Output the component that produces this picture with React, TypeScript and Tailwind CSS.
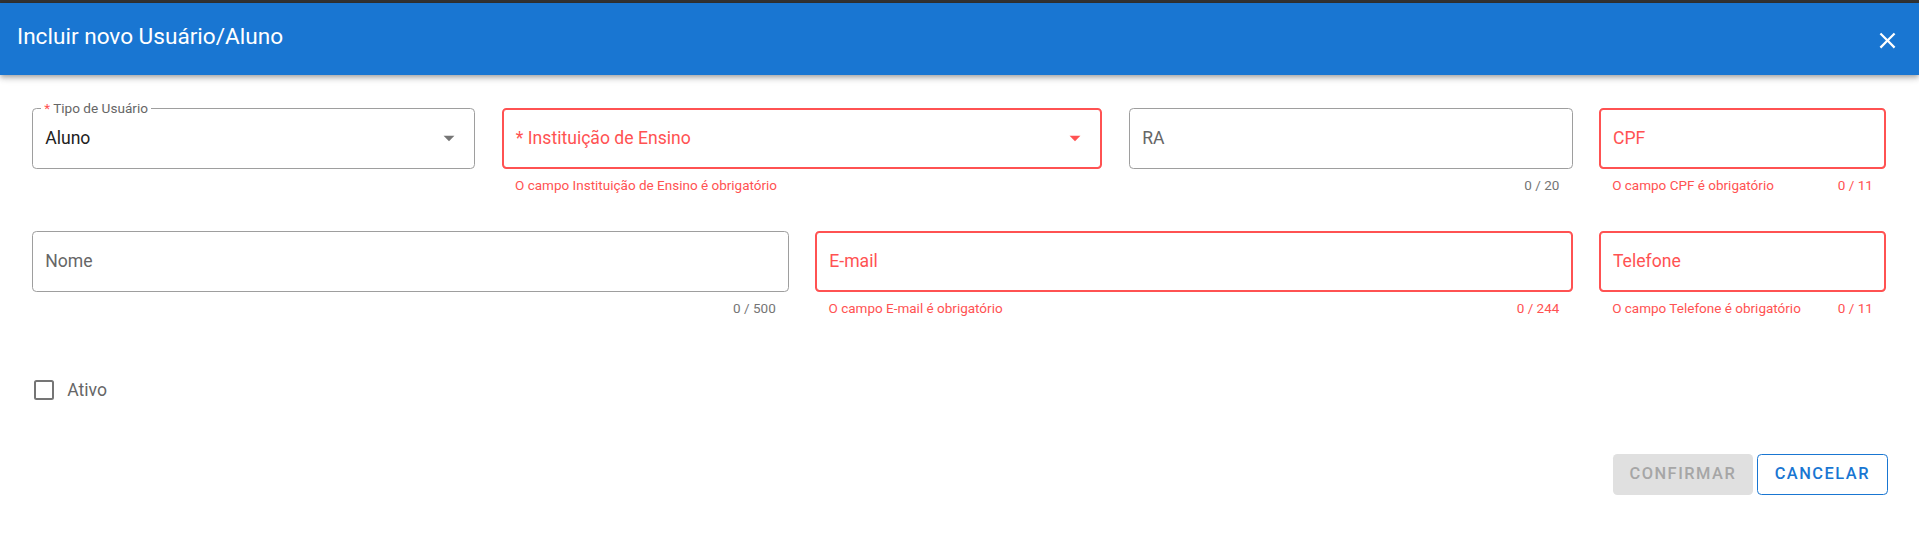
import React from 'react';

interface FieldProps {
  label: string;
  span: string;
  error?: boolean;
  required?: boolean;
  select?: boolean;
  floating?: boolean;
  value?: string;
  helper?: string;
  counter?: string;
}

function MenuDown({ color }: { color: string }) {
  return (
    <svg width="26" height="26" viewBox="0 0 24 24" className="absolute right-[12px] top-1/2 -translate-y-1/2">
      <path d="M7,10L12,15L17,10H7Z" fill={color} />
    </svg>
  );
}

function Field({ label, span, error, required, select, floating, value, helper, counter }: FieldProps) {
  return (
    <div className={`${span} h-[123.2px]`}>
      <div
        className={`relative h-[61.6px] rounded-[4.4px] flex items-center ${
          error ? 'border-2 border-[#ff5252] px-[12px]' : 'border border-[#9e9e9e] px-[12.5px]'
        }`}
      >
        {floating && (
          <span className="absolute left-[8.5px] top-[-8.5px] bg-white px-[3px] text-[13.6px] leading-[16px] text-[#666666]">
            {required && <span className="text-[#ff5252]">* </span>}
            {label}
          </span>
        )}
        {floating ? (
          <span className="text-[17.6px] text-[#212121]">{value}</span>
        ) : (
          <span className={`text-[17.6px] ${error ? 'text-[#ff5252]' : 'text-[#666666]'}`}>
            {required && '* '}
            {label}
          </span>
        )}
        {select && <MenuDown color={error ? '#ff5252' : '#757575'} />}
      </div>
      <div
        className={`mt-[9px] flex justify-between px-[13.2px] text-[13.5px] leading-[14px] ${
          error ? 'text-[#ff5252]' : 'text-[#757575]'
        }`}
      >
        <span>{helper}</span>
        <span>{counter}</span>
      </div>
    </div>
  );
}

export default function App() {
  return (
    <div className="min-h-screen bg-white font-[Roboto,sans-serif]">
      <div className="h-[3px] bg-[#333333]" />
      <div className="relative z-10 h-[72px] bg-[#1976d2] flex items-center justify-between pl-[17px] pr-[18.5px] shadow-[0_2px_4px_-1px_rgba(0,0,0,0.2),0_4px_5px_0_rgba(0,0,0,0.14),0_1px_10px_0_rgba(0,0,0,0.12)]">
        <h1 className="mb-[4px] text-[22.6px] font-normal text-white">Incluir novo Usuário/Aluno</h1>
        <svg width="27" height="27" viewBox="0 0 24 24" className="mt-[2px]">
          <path
            d="M19,6.41L17.59,5L12,10.59L6.41,5L5,6.41L10.59,12L5,17.59L6.41,19L12,13.41L17.59,19L19,17.59L13.41,12L19,6.41Z"
            fill="#ffffff"
          />
        </svg>
      </div>

      <div className="pl-[31.7px] pr-[33px] pt-[32.5px]">
        <div className="grid grid-cols-12 gap-x-[26.4px]">
          <Field span="col-span-3" label="Tipo de Usuário" required floating select value="Aluno" />
          <Field
            span="col-span-4"
            label="Instituição de Ensino"
            required
            error
            select
            helper="O campo Instituição de Ensino é obrigatório"
          />
          <Field span="col-span-3" label="RA" counter="0 / 20" />
          <Field span="col-span-2" label="CPF" error helper="O campo CPF é obrigatório" counter="0 / 11" />
          <Field span="col-span-5" label="Nome" counter="0 / 500" />
          <Field span="col-span-5" label="E-mail" error helper="O campo E-mail é obrigatório" counter="0 / 244" />
          <Field
            span="col-span-2"
            label="Telefone"
            error
            helper="O campo Telefone é obrigatório"
            counter="0 / 11"
          />
        </div>

        <label className="mt-[26px] flex h-[20px] items-center pl-[2.5px]">
          <span className="h-[19.5px] w-[19.5px] rounded-[2.5px] border-2 border-[#757575]" />
          <span className="ml-[13.5px] text-[17.6px] text-[#666666]">Ativo</span>
        </label>
      </div>

      <div className="mt-[54px] flex justify-end gap-[4.3px] pr-[31.3px]">
        <button className="h-[40.7px] w-[139.7px] rounded-[4.4px] bg-[#e0e0e0] text-[16.4px] font-medium tracking-[1.5px] text-[#a6a6a6]">
          CONFIRMAR
        </button>
        <button className="h-[40.7px] w-[130.7px] rounded-[4.4px] border border-[#1976d2] bg-white text-[16.4px] font-medium tracking-[1.5px] text-[#1976d2]">
          CANCELAR
        </button>
      </div>
    </div>
  );
}
